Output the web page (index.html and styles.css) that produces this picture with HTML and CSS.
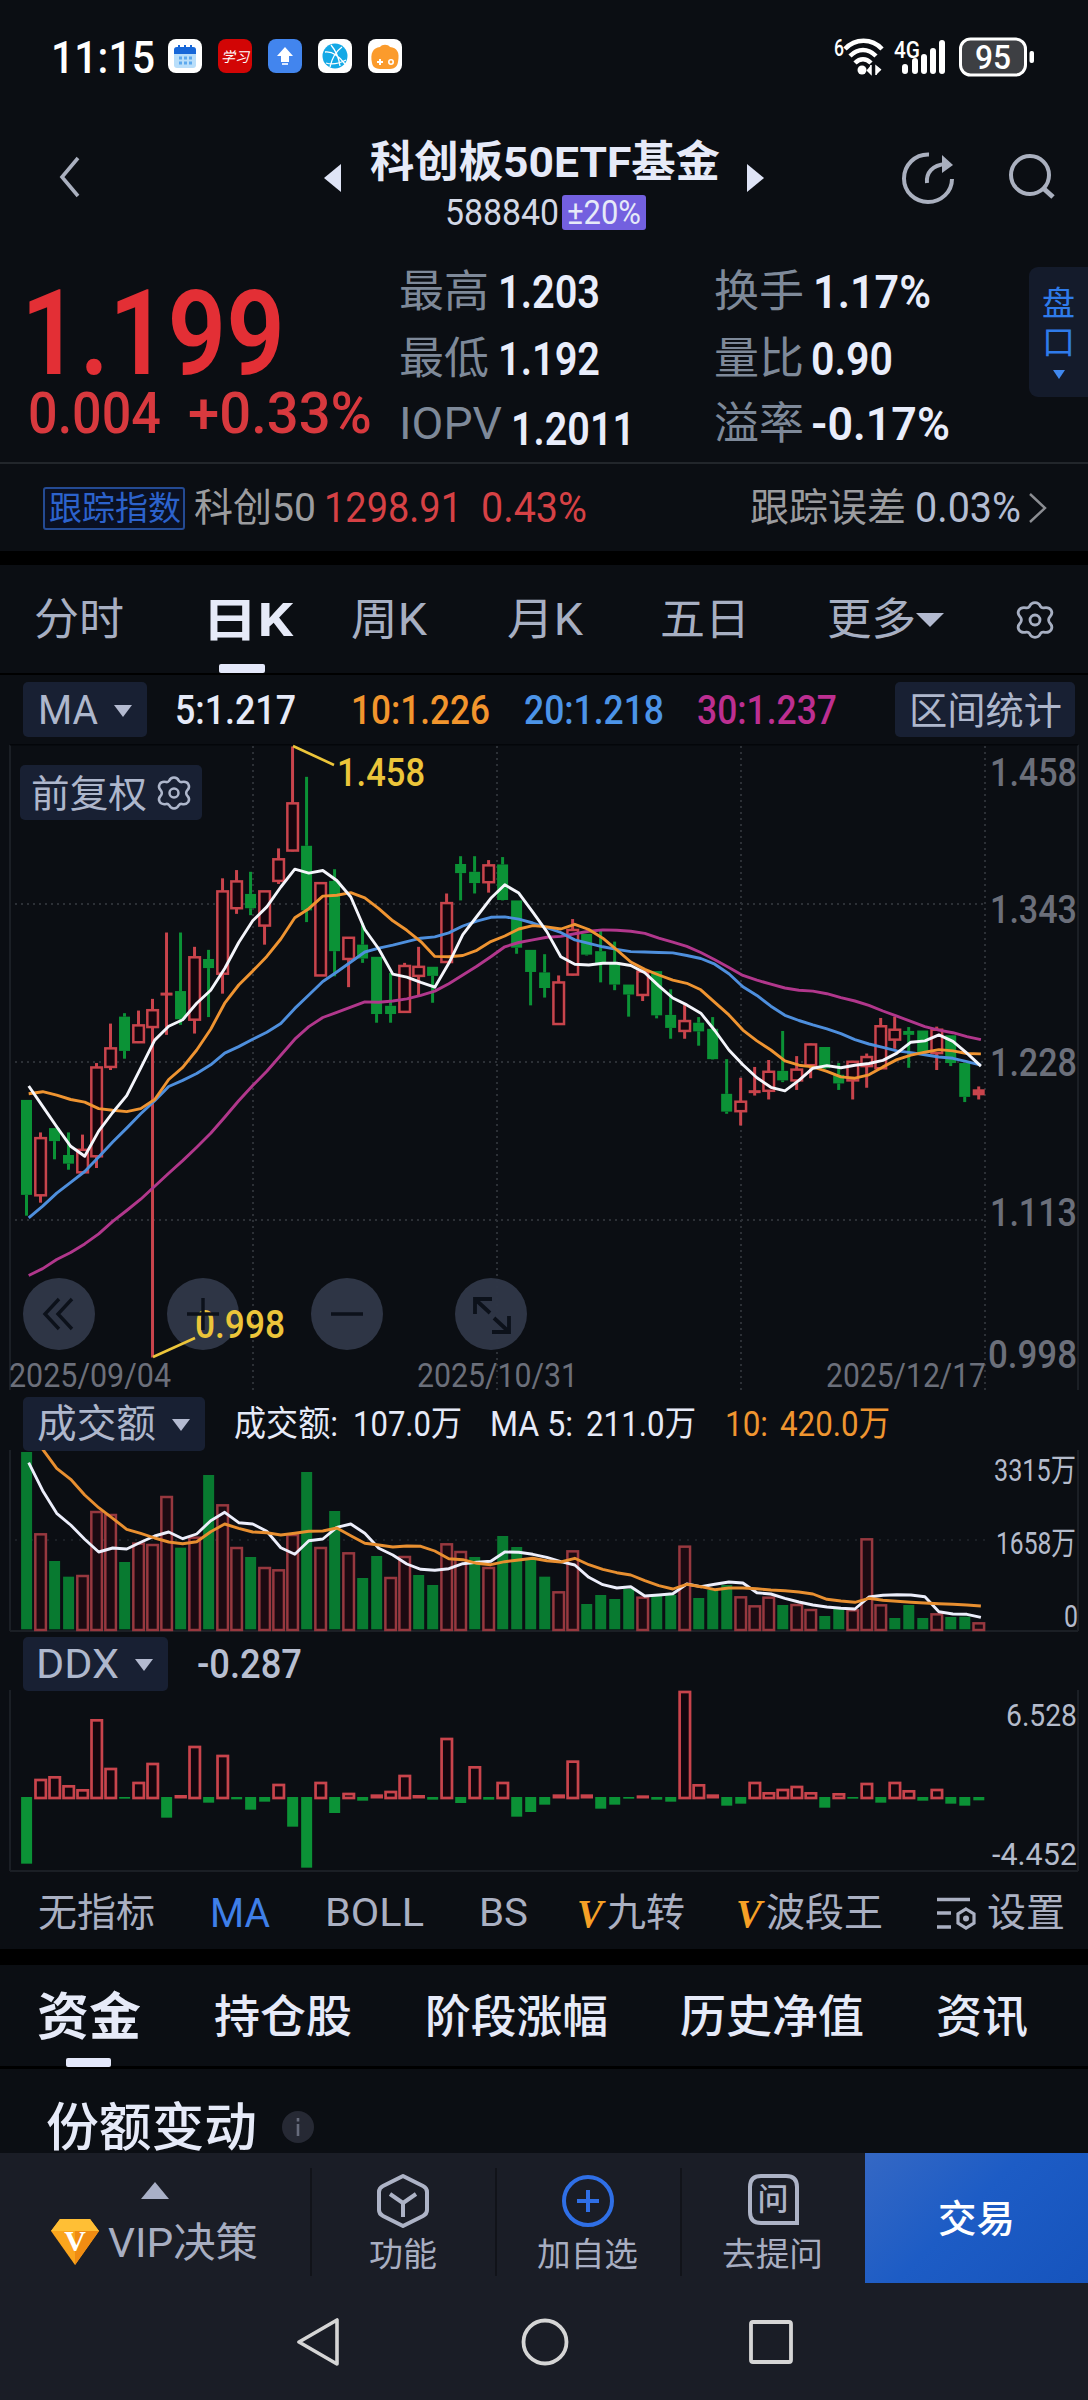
FILE: index.html
```html
<!DOCTYPE html>
<html lang="zh-CN">
<head>
<meta charset="utf-8">
<title>科创板50ETF基金 588840</title>
<link rel="stylesheet" href="styles.css">
</head>
<body>
<svg class="defs" aria-hidden="true">
  <symbol id="gear" viewBox="0 0 40 38">
    <path d="M14.5 5.500C16 2 18 1.700 20 1.700s4 .3 5.500 3.800q1 1.600 3.200 1.300c4-.8 5.800-.2 7.300 2.200s1.500 4-1 6.700q-1.400 1.700-1.400 3.300t1.400 3.300c2.500 2.700 2.500 4.300 1 6.700s-3.300 3-7.300 2.200q-2.200-.3-3.200 1.300C24 36 22 36.300 20 36.300s-4-.3-5.500-3.800q-1-1.600-3.200-1.300c-4 .8-5.800.2-7.300-2.200s-1.500-4 1-6.700q1.400-1.700 1.400-3.300t-1.400-3.300c-2.500-2.700-2.500-4.300-1-6.700s3.300-3 7.300-2.200q2.200.3 3.200-1.300z" fill="none" stroke="currentColor" stroke-width="2.800" stroke-linejoin="round"/>
    <circle cx="20" cy="19" r="5" fill="none" stroke="currentColor" stroke-width="2.800"/>
  </symbol>
</svg>

<div class="status">
  <span class="clock" data-w="104">11:15</span>
  <div class="apps">
    <svg viewBox="0 0 34 34"><rect width="34" height="34" rx="8" fill="#fff"/><rect x="6" y="8" width="22" height="21" rx="3" fill="#b9defa"/><path d="M6 15V11a3 3 0 0 1 3-3h16a3 3 0 0 1 3 3v4z" fill="#1767d8"/><path d="M11 6v4M17 6v4M23 6v4" stroke="#1767d8" stroke-width="2"/><path d="M11 19h3M16 19h3M21 19h3M11 24h3M16 24h3M21 24h3" stroke="#5da9ee" stroke-width="3"/></svg>
    <svg viewBox="0 0 34 34"><rect width="34" height="34" rx="8" fill="#d20505"/><text x="17" y="23" class="app-text">学习</text></svg>
    <svg viewBox="0 0 34 34"><rect width="34" height="34" rx="8" fill="#4285ee"/><path d="M17 8l8 9h-4v6h-8v-6H9z" fill="#fff"/><path d="M14 25h6" stroke="#dbe8ff" stroke-width="2"/></svg>
    <svg viewBox="0 0 34 34"><rect width="34" height="34" rx="8" fill="#fff"/><circle cx="17" cy="17" r="12.500" fill="#14a9e6"/><path d="M7 13c8-1 14 4 20 12M12 28c2-9 5-15 12-20M8 24c6 2 12 1 20-3M13 6c5 6 8 13 9 21" stroke="#fff" stroke-width="1.300" fill="none"/></svg>
    <svg viewBox="0 0 34 34"><rect width="34" height="34" rx="8" fill="#fff"/><path d="M4 24C2 14 5 9 12 8c2-3 8-3 10 0 7 1 10 5 8 15-1 7-6 7-13 7-7 0-12 0-13-6z" fill="#fb9b2c"/><path d="M9 23h6M12 20v6" stroke="#fff" stroke-width="2"/><circle cx="23" cy="23" r="2.200" fill="none" stroke="#fff" stroke-width="1.600"/></svg>
  </div>
  <svg class="signals" viewBox="0 0 208 44">
    <text x="1" y="22" class="net" textLength="10" lengthAdjust="spacingAndGlyphs">6</text>
    <g fill="none" stroke="#fff" stroke-width="4.500"><path d="M12 15c10-11 27-11 37 0M17 22c8-8 18-8 26 0M22 29c5-5 11-5 16 0"/></g>
    <circle cx="29" cy="36" r="4.500" fill="#fff"/>
    <path d="M38 31v9l-4-4M43 41v-9l5 4" fill="#fff" stroke="#fff" stroke-width="1.500"/>
    <text x="61" y="24" class="net" textLength="26" lengthAdjust="spacingAndGlyphs">4G</text>
    <g fill="#fff"><rect x="69" y="30" width="6" height="10" rx="3"/><rect x="79" y="24" width="6" height="16" rx="3"/><rect x="88" y="20" width="6" height="20" rx="3"/><rect x="97" y="14" width="6" height="26" rx="3"/><rect x="106" y="6" width="6" height="34" rx="3"/></g>
    <rect x="127.500" y="5" width="65" height="36" rx="10" fill="#3d3f43" stroke="#fff" stroke-width="3"/>
    <rect x="196.500" y="17" width="4.500" height="12" rx="2" fill="#fff"/>
    <text x="142" y="35" class="charge" textLength="36" lengthAdjust="spacingAndGlyphs">95</text>
  </svg>
</div>

<header class="header">
  <svg class="back" viewBox="0 0 24 44"><path d="M21 3 5 22l16 19" fill="none" stroke="#aab0bf" stroke-width="3.600"/></svg>
  <div class="instrument">
    <div class="title-row">
      <i class="prev"></i><h1 data-w="350">科创板50ETF基金</h1><i class="next"></i>
    </div>
    <div class="code-row"><span class="code" data-w="114">588840</span><span class="limit"><b data-w="74">±20%</b></span></div>
  </div>
  <svg class="share" viewBox="0 0 54 54"><g fill="none" stroke="#aab0bf" stroke-width="4"><path d="M28 3.500C14 3 3 14 3 27.500S14 51 27 51s24-10 24-23"/><path d="M26 32c-1-10 5-18 19-19"/></g><path d="M41 4l11 10-11 8z" fill="#aab0bf"/></svg>
  <svg class="search" viewBox="0 0 48 46"><g fill="none" stroke="#aab0bf" stroke-width="4"><circle cx="22" cy="21" r="19"/><path d="M35 34l10 9" stroke-width="5"/></g></svg>
</header>

<section class="quote">
  <div class="price">
    <strong data-w="264">1.199</strong>
    <div class="change"><span data-w="133">0.004</span><span data-w="184">+0.33%</span></div>
  </div>
  <dl class="stats stats-a">
    <div><dt data-w="90">最高</dt><dd data-w="102">1.203</dd></div>
    <div><dt data-w="90">最低</dt><dd data-w="102">1.192</dd></div>
    <div><dt data-w="103">IOPV</dt><dd class="low" data-w="124">1.2011</dd></div>
  </dl>
  <dl class="stats stats-b">
    <div><dt data-w="90">换手</dt><dd data-w="118">1.17%</dd></div>
    <div><dt data-w="90">量比</dt><dd data-w="82">0.90</dd></div>
    <div><dt data-w="90">溢率</dt><dd data-w="139">-0.17%</dd></div>
  </dl>
  <aside class="depth"><span>盘</span><span>口</span><i></i></aside>
</section>

<section class="track">
  <span class="tag"><b data-w="132">跟踪指数</b></span>
  <span class="grey name" data-w="122">科创50</span>
  <span class="red" data-w="138">1298.91</span>
  <span class="red pct" data-w="106">0.43%</span>
  <span class="grey err" data-w="156">跟踪误差</span>
  <span class="pale" data-w="106">0.03%</span>
  <svg viewBox="0 0 20 30"><path d="M2 1l15 14L2 29" fill="none" stroke="#8b8d92" stroke-width="2.400"/></svg>
</section>
<div class="band"></div>

<nav class="periods">
  <span data-w="90">分时</span>
  <span class="on" data-w="91">日K</span>
  <span data-w="76">周K</span>
  <span data-w="76">月K</span>
  <span data-w="90">五日</span>
  <span class="more"><b data-w="89">更多</b><i class="tri wide"></i></span>
  <svg class="gear"><use href="#gear"/></svg>
</nav>

<div class="ma-bar">
  <span class="chip ma"><b data-w="60">MA</b><i class="tri"></i></span>
  <span class="v5" data-w="121">5:1.217</span>
  <span class="v10" data-w="139">10:1.226</span>
  <span class="v20" data-w="140">20:1.218</span>
  <span class="v30" data-w="140">30:1.237</span>
  <span class="chip range"><b data-w="153">区间统计</b></span>
</div>

<div class="kbox">
  <svg id="kline" viewBox="0 744 1088 649"></svg>
  <span class="chip adjust"><b data-w="116">前复权</b><svg><use href="#gear"/></svg></span>
</div>

<div class="sub-bar vol-bar">
  <span class="chip vol"><b data-w="119">成交额</b><i class="tri"></i></span>
  <span class="s1" data-w="104">成交额:</span>
  <span class="s2" data-w="109">107.0万</span>
  <span class="s3" data-w="83">MA 5:</span>
  <span class="s4" data-w="110">211.0万</span>
  <span class="s5" data-w="43">10:</span>
  <span class="s6" data-w="110">420.0万</span>
</div>
<svg class="plot" id="volume" viewBox="0 1450 1088 183"></svg>

<div class="sub-bar ddx-bar">
  <span class="chip ddx"><b data-w="83">DDX</b><i class="tri"></i></span>
  <span class="ddx-value" data-w="105">-0.287</span>
</div>
<svg class="plot" id="ddx" viewBox="0 1690 1088 183"></svg>

<nav class="indicators">
  <span data-w="117">无指标</span>
  <span class="on" data-w="60">MA</span>
  <span data-w="99">BOLL</span>
  <span data-w="49">BS</span>
  <span class="vip"><em>V</em><b data-w="78">九转</b></span>
  <span class="vip"><em>V</em><b data-w="117">波段王</b></span>
  <span class="set"><svg viewBox="0 0 42 36"><g fill="none" stroke="#aab0c2" stroke-width="3.600"><path d="M1 3.500h33M1 17h14M1 31h14"/><path d="M30 13l8 5v9l-8 5-8-5v-9z" stroke-width="3.200"/></g><circle cx="30" cy="22.500" r="3" fill="#aab0c2"/></svg><b data-w="78">设置</b></span>
</nav>
<div class="band tall"></div>

<nav class="sections">
  <span class="on" data-w="104">资金</span>
  <span data-w="138">持仓股</span>
  <span data-w="183">阶段涨幅</span>
  <span data-w="184">历史净值</span>
  <span data-w="92">资讯</span>
</nav>
<section class="shares">
  <h2 data-w="211">份额变动</h2>
  <svg viewBox="0 0 32 32"><circle cx="16" cy="16" r="16" fill="#262934"/><path d="M16 13v12M16 7v3.500" stroke="#666b7b" stroke-width="2.600"/></svg>
</section>

<footer class="dock">
  <div class="vip-cell">
    <i class="up"></i>
    <div><svg viewBox="0 0 48 46"><path d="M9 0h30l9 12-24 34L0 12z" fill="#fba51d"/><path d="M9 0h30l9 12H0z" fill="#ffbf35"/><path d="M48 12 24 46V12z" fill="#f08c12"/><text x="24" y="32">V</text></svg><b data-w="150">VIP决策</b></div>
  </div>
  <div class="cell">
    <svg viewBox="0 0 54 56"><g fill="none" stroke="#adb3c6" stroke-width="4" stroke-linejoin="round"><path d="M27 3l20 10q4 2 4 6v18q0 4-4 6L27 53 7 43q-4-2-4-6V19q0-4 4-6z"/><path d="M14 21l13 9 13-9M27 30v14"/></g></svg>
    <b data-w="68">功能</b>
  </div>
  <div class="cell">
    <svg viewBox="0 0 54 56"><g fill="none" stroke="#2f6fe6" stroke-width="4"><circle cx="27" cy="28" r="24"/><path d="M16 28h22M27 17v22"/></g></svg>
    <b data-w="101">加自选</b>
  </div>
  <div class="cell">
    <svg viewBox="0 0 54 56"><path d="M51 50H15Q4 50 4 39V14Q4 3 15 3h25q11 0 11 11z" fill="none" stroke="#adb3c6" stroke-width="4"/><text x="27" y="37">问</text></svg>
    <b data-w="101">去提问</b>
  </div>
  <div class="trade"><b data-w="77">交易</b></div>
</footer>
<div class="sysnav">
  <svg viewBox="0 0 48 48"><path d="M42 2v44L4 24z" fill="none" stroke="#d5d5d5" stroke-width="3.600" stroke-linejoin="round"/></svg>
  <svg viewBox="0 0 48 48"><circle cx="24" cy="24" r="21.500" fill="none" stroke="#d5d5d5" stroke-width="3.800"/></svg>
  <svg viewBox="0 0 48 48"><rect x="4" y="4" width="40" height="40" rx="2" fill="none" stroke="#d5d5d5" stroke-width="3.800"/></svg>
</div>
<script src="script.js"></script>
</body>
</html>
```
FILE: styles.css
```css
* { box-sizing: border-box; }
body {
  margin: 0;
  width: 1088px;
  height: 2400px;
  overflow: hidden;
  background: #0b0e13;
  color: #e6eaf8;
  font-family: Roboto, "Noto Sans CJK SC", sans-serif;
  font-size: 40px;
  line-height: 1;
  white-space: nowrap;
}
h1, h2, dl, dd, dt { margin: 0; }
b, i, em { font-weight: inherit; font-style: normal; }
svg { display: block; flex: none; }
.defs { position: absolute; width: 0; height: 0; }
[data-w] { display: block; flex: none; }
.fit { display: inline-block; transform-origin: 0 50%; }
.band { height: 14px; background: #000; }
.band.tall { height: 16px; }

.tri {
  flex: none;
  border: 9.5px solid transparent;
  border-top: 12px solid #b3bad0;
  border-bottom: 0;
}
.tri.wide { border-width: 14px 14px 0; }
.chip {
  display: flex;
  align-items: center;
  flex: none;
  height: 55px;
  padding-top: 2px;
  border-radius: 5px;
  background: #182033;
  color: #aeb7cc;
}

.status { display: flex; height: 112px; padding: 0 47px 0 51px; align-items: center; }
.clock { font-size: 45px; color: #fff; padding-top: 2px; font-weight: 500; }
.apps { display: flex; gap: 16px; margin-left: 13px; }
.apps svg { width: 34px; height: 34px; }
.app-text { fill: #fff; font: italic 14px "Noto Sans CJK SC", sans-serif; text-anchor: middle; }
.signals { width: 208px; height: 44px; margin-left: auto; }
.net { fill: #fff; font-size: 23px; font-weight: 500; }
.charge { fill: #fff; font-size: 34px; font-weight: 500; }

.header { display: flex; height: 138px; padding: 25px 34px 0 57px; }
.back { width: 24px; height: 44px; margin-top: 18px; }
.instrument { width: 440px; margin-left: 243px; }
.title-row { display: flex; align-items: center; height: 50px; }
.title-row h1 { margin: 0 27px 0 29px; padding-top: 1px; font-size: 43px; font-weight: 700; }
.prev, .next { margin-top: 32px; border: 14.5px solid transparent; }
.prev { border-right: 17px solid #dfe4f6; border-left: 0; }
.next { border-left: 17px solid #dfe4f6; border-right: 0; }
.code-row { display: flex; align-items: center; height: 36px; margin: 7px 0 0 121px; }
.code { padding-top: 1px; font-size: 36px; color: #d3d8e6; }
.limit { display: flex; align-items: center; width: 84px; height: 35px; margin-left: 3px; padding-left: 5px; border-radius: 3px; background: #7360df; font-size: 33px; }
.share { width: 54px; height: 54px; margin: 14px 0 0 137px; }
.search { width: 48px; height: 46px; margin: 17px 0 0 53px; }

.quote { display: flex; height: 214px; border-bottom: 2px solid #22262b; }
.price { width: 399px; padding: 25px 0 0 21px; color: #e32f35; }
.price strong { font-size: 118px; font-weight: 600; }
.change { display: flex; gap: 27px; margin-top: -8px; padding-left: 7px; font-size: 57px; font-weight: 500; color: #d8393e; }
.stats { width: 315px; padding-top: 8px; }
.stats div { display: flex; align-items: center; height: 67px; }
.stats dt { font-size: 44px; color: #7e8999; }
.stats dd { margin-left: 9px; font-size: 47px; font-weight: 600; color: #e9edfb; }
.stats dd.low { padding-top: 10px; }
.stats div:last-child { height: 63px; }
.stats-b div + div dd { margin-left: 7px; }
.depth { width: 59px; height: 130px; margin-top: 17px; padding-top: 20px; border-radius: 9px 0 0 9px; background: #141b2b; color: #2f7bea; font-size: 33px; text-align: center; }
.depth span { display: block; height: 39px; }
.depth i { display: block; width: 0; margin: 5px auto 0; border: 6.5px solid transparent; border-top: 9px solid #4088ee; border-bottom: 0; }

.track { display: flex; align-items: center; height: 87px; padding: 1px 0 0 43px; font-size: 42px; }
.tag { display: flex; align-items: center; width: 142px; height: 43px; padding: 1px 4px 0; border: 2px solid #244a93; border-radius: 3px; background: #0a1022; color: #2c62cc; font-size: 33px; }
.grey { font-size: 39px; padding-top: 1px; color: #9b9c9f; }
.name { margin: 0 8px 0 9px; }
.red { color: #d64145; }
.pct { margin-left: 19px; }
.err { margin: 0 9px 0 163px; }
.pale { color: #b3bdd2; }
.track svg { width: 20px; height: 30px; margin-left: 7px; }

.periods { display: grid; grid-template-columns: 168px 149px 156px 153px 167px 188px auto; align-items: center; height: 110px; padding: 2px 0 0 34px; border-bottom: 2px solid #000; font-size: 44px; color: #a7afc2; }
.periods .on, .sections .on { position: relative; font-weight: 700; color: #e6eaf8; }
.periods .on { font-size: 46px; }
.on::after { content: ""; position: absolute; left: 17px; top: 67px; width: 46px; height: 9px; border-radius: 2px; background: #e4e8fa; }
.more { display: flex; align-items: center; }
.gear { width: 40px; height: 38px; color: #a7afc2; }

.ma-bar { display: flex; align-items: center; height: 69px; padding-left: 23px; font-weight: 500; }
.ma-bar > [data-w] { padding-top: 2px; }
.ma-bar .chip { font-weight: 400; }
.ma { width: 124px; padding-left: 15px; }
.ma .tri { margin-left: 16px; }
.v5 { margin-left: 28px; }
.v10 { margin-left: 55px; color: #f2952d; }
.v20 { margin-left: 34px; color: #4c94e8; }
.v30 { margin-left: 33px; color: #bd2f91; }
.range { width: 180px; margin-left: 58px; padding-left: 14px; font-size: 38px; }

.kbox { position: relative; height: 649px; }
.kbox > svg { width: 1088px; height: 649px; }
.adjust { position: absolute; left: 20px; top: 21px; width: 182px; padding-left: 11px; font-size: 38px; }
.adjust svg { width: 36px; height: 34px; margin: -2px 0 0 9px; }
.axis { fill: #6b6f7a; font-weight: 500; font-size: 39px; }
.date { fill: #6b6f7a; font-size: 34px; }
.mark { fill: #ecc53a; font-weight: 500; font-size: 38px; }
.scale { fill: #b4bbcb; font-size: 32px; }

.sub-bar { display: flex; align-items: center; height: 57px; padding: 4px 0 0 23px; }
.sub-bar .chip { height: 54px; }
.vol-bar { font-size: 35px; }
.vol-bar > [data-w] { padding-top: 2px; }
.vol { width: 182px; padding-left: 14px; font-size: 39px; }
.vol .tri { margin-left: 16px; }
.ddx { width: 145px; padding-left: 13px; }
.ddx .tri { margin-left: 16px; }
.ddx-value { margin-left: 29px; padding-top: 2px; font-weight: 500; color: #b8bfd1; }
.s1 { margin-left: 29px; }
.s2 { margin-left: 15px; }
.s3 { margin-left: 28px; }
.s4 { margin-left: 13px; }
.s5 { margin-left: 29px; color: #ef9530; }
.s6 { margin-left: 12px; color: #ef9530; }
.plot { width: 1088px; height: 183px; }

.indicators { display: grid; grid-template-columns: 172px 115px 154px 98px 159px 200px auto; align-items: center; height: 76px; padding: 5px 0 0 38px; font-size: 39px; color: #aab0c2; }
.indicators span { position: relative; }
.indicators .on { color: #3f7fe8; font-size: 40px; }
.indicators .on::after { content: none; }
.vip, .set { display: flex; align-items: center; }
.vip em { width: 30px; color: #f6a026; font: italic 700 39px/1 "Liberation Serif", serif; }
.set svg { width: 42px; height: 36px; margin-right: 9px; }

.sections { display: grid; grid-template-columns: 177px 211px 255px 256px auto; align-items: center; height: 104px; padding: 4px 0 0 37px; border-bottom: 3px solid #000; font-size: 45px; font-weight: 500; }
.sections .on { font-size: 51px; font-weight: 700; }
.sections .on::after { left: 29px; top: 66px; width: 45px; }
.shares { display: flex; align-items: center; height: 84px; padding: 31px 0 0 46px; overflow: hidden; }
.shares h2 { padding-top: 4px; font-size: 52px; font-weight: 500; }
.shares svg { width: 32px; height: 32px; margin-left: 25px; }

.dock { display: flex; height: 130px; background: #1a1d26; color: #a8aec1; }
.vip-cell { width: 310px; padding-top: 29px; }
.up { display: block; width: 0; margin-left: 141px; border: 14px solid transparent; border-bottom: 17px solid #a9b0c7; border-top: 0; }
.vip-cell div { display: flex; align-items: center; margin: 20px 0 0 51px; font-size: 41px; }
.vip-cell b { padding-top: 3px; }
.vip-cell svg { width: 48px; height: 46px; margin-right: 9px; }
.vip-cell text { fill: #fff; font: 700 30px "Liberation Serif", serif; text-anchor: middle; }
.cell { display: flex; flex-direction: column; align-items: center; width: 185px; padding-top: 20px; background: linear-gradient(#111319, #111319) 0 15px / 2px 108px no-repeat; font-size: 33px; }
.cell svg { width: 54px; height: 56px; margin-bottom: 9px; }
.cell text { fill: #adb3c6; font-size: 31px; font-weight: 500; text-anchor: middle; }
.trade { display: flex; align-items: center; justify-content: center; width: 223px; padding-top: 2px; background: linear-gradient(135deg, #3568c4 0%, #1d5cc5 45%, #1654bd 100%); color: #fff; font-size: 38px; font-weight: 500; }
.sysnav { display: flex; align-items: flex-start; gap: 178px; height: 117px; padding: 35px 0 0 295px; background: #1a1d26; }
.sysnav svg { width: 48px; height: 48px; }
```
FILE: script.js
```js
document.querySelectorAll('[data-w]').forEach(el => {
  const w = +el.dataset.w;
  const inner = document.createElement('span');
  inner.className = 'fit';
  inner.textContent = el.textContent;
  el.textContent = '';
  el.append(inner);
  const natural = inner.getBoundingClientRect().width;
  inner.style.transform = `scaleX(${w / natural})`;
  el.style.width = w + 'px';
});

const RED = '#c9444c', GREEN = '#0b9236', STEP = 14.003, X0 = 26.5;
const x = i => X0 + i * STEP;
const rect = (x, y, w, h, a) => `<rect x="${x}" y="${y}" width="${w}" height="${h}" ${a}/>`;
const line = (x1, y1, x2, y2, a) => `<line x1="${x1}" y1="${y1}" x2="${x2}" y2="${y2}" ${a}/>`;
const label = (cls, x1, x2, y, t) =>
  `<text class="${cls}" x="${x1}" y="${y}" textLength="${x2 - x1}" lengthAdjust="spacingAndGlyphs">${t}</text>`;
const curve = (vals, y, color, from = 0) =>
  `<polyline fill="none" stroke="${color}" stroke-width="2.900" stroke-linejoin="round" points="${
    vals.map((v, i) => `${(x(i + from) + 2.2).toFixed(1)},${y(v).toFixed(1)}`).join(' ')}"/>`;
const GRID = 'stroke="#2c3036" stroke-width="2" stroke-dasharray="2 4"';
const FRAME = 'stroke="#1b1f25" stroke-width="2"';

// Candles: colour, high, body top, body bottom, low
const candles = `G853,853,1072,1120 R928,940,1073,1090 G918,918,948,990 G928,980,1000,1014 R933,967,1020,1020
R768,777,983,1010 R677,733,777,784 G653,661,740,758 R647,680,720,722 R620,645,685,1447 R467,609,609,703
G467,602,667,680 R500,523,668,700 G507,528,549,662 R342,371,562,608 R323,348,411,424 G327,378,411,427
R371,371,451,495 R273,297,348,355 R38,168,278,280 G108,267,416,443 R352,352,566,567 G321,348,510,568
R478,478,528,593 G445,495,527,537 G523,523,655,675 G560,636,655,675 R537,543,650,652 R500,545,567,612
G546,546,567,629 R377,398,535,536 G291,309,330,393 G291,327,353,377 R300,311,351,375 G293,310,392,393
G393,393,502,516 G507,507,558,635 G517,559,595,617 R566,581,678,680 R436,460,564,566 G470,470,518,520
G463,510,538,582 G488,535,587,600 G587,587,610,661 R552,556,611,625 G556,556,658,665 G598,657,687,712
R634,670,694,712 G662,675,695,728 G662,689,759,760 G759,839,880,885 R802,856,879,912 R777,834,834,843
R761,787,832,852 G694,786,808,812 R752,782,808,830 R723,724,773,803 G731,731,780,782 G768,795,815,830
R763,764,808,852 R746,753,775,825 R664,682,780,782 R661,690,714,735 G685,694,703,779 G693,693,743,745
R684,690,745,784 G704,704,768,775 G768,768,846,858 R822,832,839,852`.split(/\s+/);
const ma5 = [821,868,915,960,983,925,882,843,780,715,683,668,630,600,550,490,440,408,362,321,330,324,347,385,460,505,563,570,582,593,538,472,430,388,357,376,420,465,523,540,542,538,538,543,560,590,618,634,653,693,738,772,802,824,832,808,780,774,779,773,769,762,745,720,717,703,718,745,775];
const ma10 = [839,834,842,852,858,873,877,880,873,852,806,778,738,690,630,588,556,522,482,433,412,383,381,375,387,412,440,462,488,522,523,520,508,488,475,459,451,454,459,448,460,480,507,535,552,565,577,584,599,628,657,692,717,738,763,773,777,787,800,803,795,777,760,750,743,737,740,746,747];
const ma20 = [1125,1098,1068,1043,1018,985,950,918,885,855,822,808,792,772,745,730,713,697,677,642,611,580,558,535,512,503,496,488,480,477,468,452,441,432,431,436,445,456,467,484,492,500,506,511,512,513,514,520,527,540,562,592,612,637,658,670,680,689,700,714,724,732,740,744,749,754,757,765,773];
const ma30 = [1258,1242,1221,1205,1185,1162,1133,1108,1082,1052,1022,993,962,930,893,855,820,787,750,713,684,663,651,639,627,628,625,620,612,602,585,565,545,523,500,490,484,478,476,470,464,461,462,464,469,480,489,499,513,530,548,566,577,586,595,600,602,608,617,625,635,648,660,672,684,692,698,707,714];

const ky = v => 730 + v / 2.306;
let k = '';
[253, 497, 741, 985].forEach(gx => k += line(gx, 746, gx, 1390, GRID));
[904, 1062, 1220].forEach(gy => k += line(15, gy, 985, gy, GRID));
k += line(10, 745, 10, 1390, FRAME) + line(1078, 745, 1078, 1390, FRAME)
  + line(10, 744.5, 1078, 744.5, 'stroke="#04060a" stroke-width="2"');
[59, 203, 347, 491].forEach(cx => k += `<circle cx="${cx}" cy="1314" r="36" fill="#2f3747" fill-opacity=".97"/>`);
candles.forEach((c, i) => {
  const up = c[0] === 'R', color = up ? RED : GREEN;
  const [h, t, b, l] = c.slice(1).split(',').map(v => ky(+v));
  k += line(x(i), h, x(i), t, `stroke="${color}" stroke-width="3"`)
    + line(x(i), b, x(i), l, `stroke="${color}" stroke-width="3"`);
  if (up && b - t > 5) k += rect(x(i) - 5.2, t + .5, 10.6, b - t - .5, `fill="#14060d" stroke="${color}" stroke-width="2.500"`);
  else k += rect(x(i) - (up ? 6 : 5.5), t - (up ? 1.5 : 0), up ? 12 : 11, Math.max(b - t, 0) + (up ? 3 : 0), `fill="${color}"`);
});
k += curve(ma30, ky, '#b1378c') + curve(ma20, ky, '#4e8fdd') + curve(ma10, ky, '#ef9431') + curve(ma5, ky, '#f4f5fb');
const POINTER = 'stroke="#ecc53a" stroke-width="2.600"';
k += line(293, 746, 334, 765, POINTER) + line(153, 1357, 195, 1338, POINTER)
  + label('mark', 337, 425, 786, '1.458') + label('mark', 195, 285, 1338, '0.998');
k += `<g fill="none" stroke="#0c111a" stroke-width="3.400">
  <path d="M59 1299l-14 15 14 15M72 1299l-14 15 14 15"/>
  <path d="M187 1314h32M203 1298v32M331 1314h32"/>
  <path d="M475 1314v-15h17M476 1300l14 13M509 1316v16h-17M508 1331l-14-13" stroke-width="3.800"/></g>`;
k += label('date', 9, 171, 1387, '2025/09/04') + label('date', 417, 578, 1387, '2025/10/31') + label('date', 826, 986, 1387, '2025/12/17');
[['1.458', 786], ['1.343', 923], ['1.228', 1076], ['1.113', 1226]].forEach(([t, y]) => k += label('axis', 990, 1077, y, t));
k += label('axis', 988, 1077, 1368, '0.998');
document.getElementById('kline').innerHTML = k;

// Turnover bars: colour and bar top
const turnover = `G186 R430 G513 G560 R555 R363 R372 G516 R458 R462 R318 G473 R440 G255 R343 R471 G501 R531 R538 R432
G246 R471 G363 R487 G564 G498 R561 R498 G555 G585 R460 R483 G501 R531 G438 G471 G510 G560 R604 R481 G642 G615 G627
G597 R620 G618 G615 R467 G624 G600 G585 R619 R646 R620 G645 R642 R657 G678 G655 R658 R445 R643 G684 G645 G684 R670
G681 G680 R697`.split(/\s+/);
const vol5 = [218,302,370,405,448,486,474,477,457,438,426,446,432,392,367,398,402,424,473,493,452,447,412,402,430,475,495,522,538,541,536,521,517,514,486,487,493,502,515,525,562,584,594,590,618,615,611,582,590,583,576,579,608,612,625,636,645,651,655,657,621,616,614,615,620,665,672,673,682];
const vol10 = [178,235,268,315,353,385,418,430,444,456,461,455,425,402,415,426,428,435,430,424,423,414,437,460,465,471,468,469,483,506,509,520,524,515,510,505,512,516,505,524,538,548,555,572,587,597,583,590,599,594,594,596,600,602,606,612,628,633,637,625,631,634,637,639,641,643,645,648];
const py = v => 1390 + v / 3;
let s = line(10, 1450, 10, 1631, FRAME) + line(1078, 1450, 1078, 1631, FRAME) + line(10, 1631, 1078, 1631, FRAME)
  + line(15, 1540, 985, 1540, 'stroke="#1c2026" stroke-width="2" stroke-dasharray="2 6"');
turnover.forEach((c, i) => {
  const t = py(+c.slice(1));
  s += c[0] === 'R'
    ? rect(x(i) - 5.2, t + 1, 10.6, 1629 - t, 'fill="#1b0a11" stroke="#97383f" stroke-width="2.500"')
    : rect(x(i) - 5.4, t, 11, 1629.3 - t, 'fill="#087a30"');
});
s += curve(vol5, py, '#eceefb') + curve(vol10, py, '#e88f30', 1);
s += label('scale', 994, 1076, 1481, '3315万') + label('scale', 996, 1076, 1554, '1658万') + label('scale', 1064, 1078, 1627, '0');
document.getElementById('volume').innerHTML = s;

// DDX bars: colour and the end that is away from the zero line
const flow = `G1421 R1167 R1159 R1186 R1198 R988 R1134 G1226 R1176 R1119 G1283 R1215 R1068 G1238 R1095 G1228 G1259 G1235
R1182 G1310 G1433 R1176 G1269 R1209 G1232 R1213 R1203 R1155 R1215 G1229 R1044 G1239 R1129 G1229 R1176 G1280 G1266
G1244 R1213 R1112 R1213 G1256 G1244 G1226 R1216 G1229 G1235 R903 R1183 R1213 G1247 G1241 R1176 R1207 R1197 R1188
R1207 G1253 R1210 G1226 R1179 G1238 R1176 R1201 G1232 R1197 G1241 G1247 G1231`.split(/\s+/);
const zero = py(1221);
let d = line(10, 1690, 10, 1871, FRAME) + line(1078, 1690, 1078, 1871, FRAME) + line(10, 1871, 1078, 1871, FRAME);
flow.forEach((c, i) => {
  const e = py(+c.slice(1));
  if (c[0] === 'G') d += rect(x(i) - 5.4, zero, 11, e - zero, `fill="${GREEN}"`);
  else if (zero - e > 3.5) d += rect(x(i) - 5, e + 1, 10.4, zero - e, `fill="#14060d" stroke="${RED}" stroke-width="2.700"`);
  else d += rect(x(i) - 6, e, 12.4, zero + 1.5 - e, `fill="${RED}"`);
});
d += label('scale', 1006, 1077, 1726, '6.528') + label('scale', 992, 1077, 1865, '-4.452');
document.getElementById('ddx').innerHTML = d;
```
